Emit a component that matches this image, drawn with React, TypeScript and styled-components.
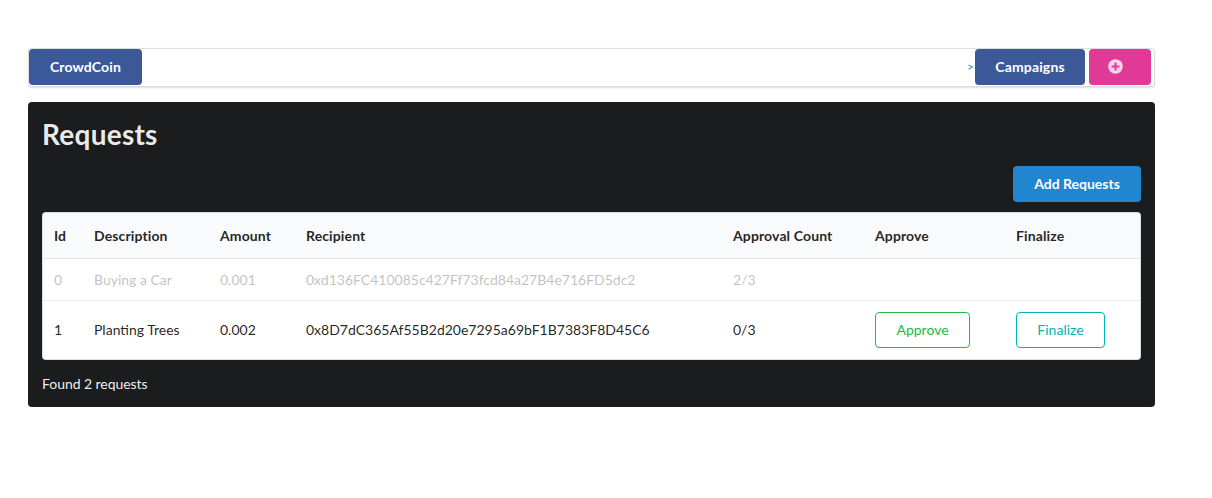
import React from "react";
import styled, { createGlobalStyle } from "styled-components";

const Global = createGlobalStyle`
  html, body { margin: 0; padding: 0; background: #fff; }
  body { font-family: Lato, "Helvetica Neue", Arial, Helvetica, sans-serif; font-size: 14px; line-height: 1.4285em; color: rgba(0,0,0,.87); }
`;

const Page = styled.div`
  width: 1127px;
  margin-left: 28px;
  padding-top: 48px;
`;

const Menu = styled.nav`
  display: flex;
  align-items: stretch;
  height: 39px;
  box-sizing: border-box;
  padding: 1px 4px 2px 1px;
  background: #fff;
  border: 0;
  border-radius: 4px;
  box-shadow: 0 0 0 1px rgba(34,36,38,.15) inset, 0 1px 2px 0 rgba(34,36,38,.15);
`;

const Button = styled.button<{ $bg: string; $w: number; $tracking?: number }>`
  display: flex;
  align-items: center;
  justify-content: center;
  width: ${(p) => p.$w}px;
  height: 36px;
  padding: 0 0 2px;
  border: 0;
  border-radius: 4px;
  background: ${(p) => p.$bg};
  color: #fff;
  font-family: Lato, sans-serif;
  font-size: 14px;
  font-weight: 700;
  letter-spacing: ${(p) => p.$tracking ?? 0.15}px;
`;

const Spacer = styled.div`
  flex: 1;
`;

const Chevron = styled.a`
  align-self: center;
  margin-right: 1px;
  font-size: 12px;
  line-height: 14px;
  color: #4183c4;
`;

const PlusButton = styled(Button)`
  margin-left: 4px;
  padding: 0 10px 1px 0;
`;

const Panel = styled.section`
  margin-top: 15px;
  height: 305px;
  box-sizing: border-box;
  padding: 14px;
  background: #1b1c1d;
  border-radius: 4px;
  color: rgba(255,255,255,.9);
`;

const Title = styled.h2`
  margin: 0;
  height: 50px;
  font-size: 28px;
  line-height: 37px;
  font-weight: 700;
  letter-spacing: .25px;
  color: rgba(255,255,255,.92);
`;

const Actions = styled.div`
  display: flex;
  justify-content: flex-end;
`;

const Table = styled.table`
  width: 1099px;
  margin-top: 10px;
  table-layout: fixed;
  border-collapse: separate;
  border-spacing: 0;
  background: #fff;
  border: 1px solid rgba(34,36,38,.15);
  border-radius: 4px;
  color: rgba(0,0,0,.87);
`;

const Head = styled.th<{ $w: number }>`
  width: ${(p) => p.$w}px;
  height: 46px;
  box-sizing: border-box;
  padding: 1px 11px 0;
  text-align: left;
  font-weight: 700;
  letter-spacing: .12px;
  background: #f9fafb;
  border-bottom: 1px solid rgba(34,36,38,.1);
  &:first-child { border-top-left-radius: 4px; }
  &:last-child { border-top-right-radius: 4px; }
`;

const Row = styled.tr<{ $disabled?: boolean }>`
  color: ${(p) => (p.$disabled ? "rgba(40,40,40,.3)" : "inherit")};
  height: ${(p) => (p.$disabled ? 42 : 58)}px;
`;

const Cell = styled.td<{ $ruled?: boolean }>`
  box-sizing: border-box;
  padding: 0 11px;
  border-bottom: ${(p) => (p.$ruled ? "1px solid rgba(34,36,38,.1)" : "0")};
`;

const OutlineButton = styled.button<{ $color: string; $w: number }>`
  display: block;
  width: ${(p) => p.$w}px;
  height: 36px;
  padding: 0 0 2px;
  background: transparent;
  border: 1px solid ${(p) => p.$color};
  border-radius: 4px;
  color: ${(p) => p.$color};
  font-family: Lato, sans-serif;
  font-size: 14px;
  font-weight: 400;
`;

const Found = styled.div`
  margin-top: 14px;
  letter-spacing: -.05px;
  color: rgba(255,255,255,.95);
`;

const PlusIcon = () => (
  <svg width="15" height="15" viewBox="0 0 15 15" aria-hidden="true">
    <circle cx="7.5" cy="7.5" r="7.25" fill="#fbd3e8" />
    <path d="M7.5 3.6v7.8M3.6 7.5h7.8" stroke="#e03997" strokeWidth="2" />
  </svg>
);

const columns: [string, number][] = [
  ["Id", 40],
  ["Description", 126],
  ["Amount", 86],
  ["Recipient", 427],
  ["Approval Count", 142],
  ["Approve", 141],
  ["Finalize", 135],
];

export default function App() {
  return (
    <Page>
      <Global />
      <Menu>
        <Button $bg="#3b5998" $w={113}>CrowdCoin</Button>
        <Spacer />
        <Chevron>&gt;</Chevron>
        <Button $bg="#3b5998" $w={110}>Campaigns</Button>
        <PlusButton $bg="#e03997" $w={62}><PlusIcon /></PlusButton>
      </Menu>
      <Panel>
        <Title>Requests</Title>
        <Actions>
          <Button $bg="#2185d0" $w={128} $tracking={0}>Add Requests</Button>
        </Actions>
        <Table>
          <thead>
            <tr>
              {columns.map(([name, w]) => (
                <Head key={name} $w={w}>{name}</Head>
              ))}
            </tr>
          </thead>
          <tbody>
            <Row $disabled>
              <Cell $ruled>0</Cell>
              <Cell $ruled>Buying a Car</Cell>
              <Cell $ruled>0.001</Cell>
              <Cell $ruled>0xd136FC410085c427Ff73fcd84a27B4e716FD5dc2</Cell>
              <Cell $ruled>2/3</Cell>
              <Cell $ruled />
              <Cell $ruled />
            </Row>
            <Row>
              <Cell>1</Cell>
              <Cell>Planting Trees</Cell>
              <Cell>0.002</Cell>
              <Cell>0x8D7dC365Af55B2d20e7295a69bF1B7383F8D45C6</Cell>
              <Cell>0/3</Cell>
              <Cell><OutlineButton $color="#21ba45" $w={95}>Approve</OutlineButton></Cell>
              <Cell><OutlineButton $color="#00b5ad" $w={89}>Finalize</OutlineButton></Cell>
            </Row>
          </tbody>
        </Table>
        <Found>Found 2 requests</Found>
      </Panel>
    </Page>
  );
}
